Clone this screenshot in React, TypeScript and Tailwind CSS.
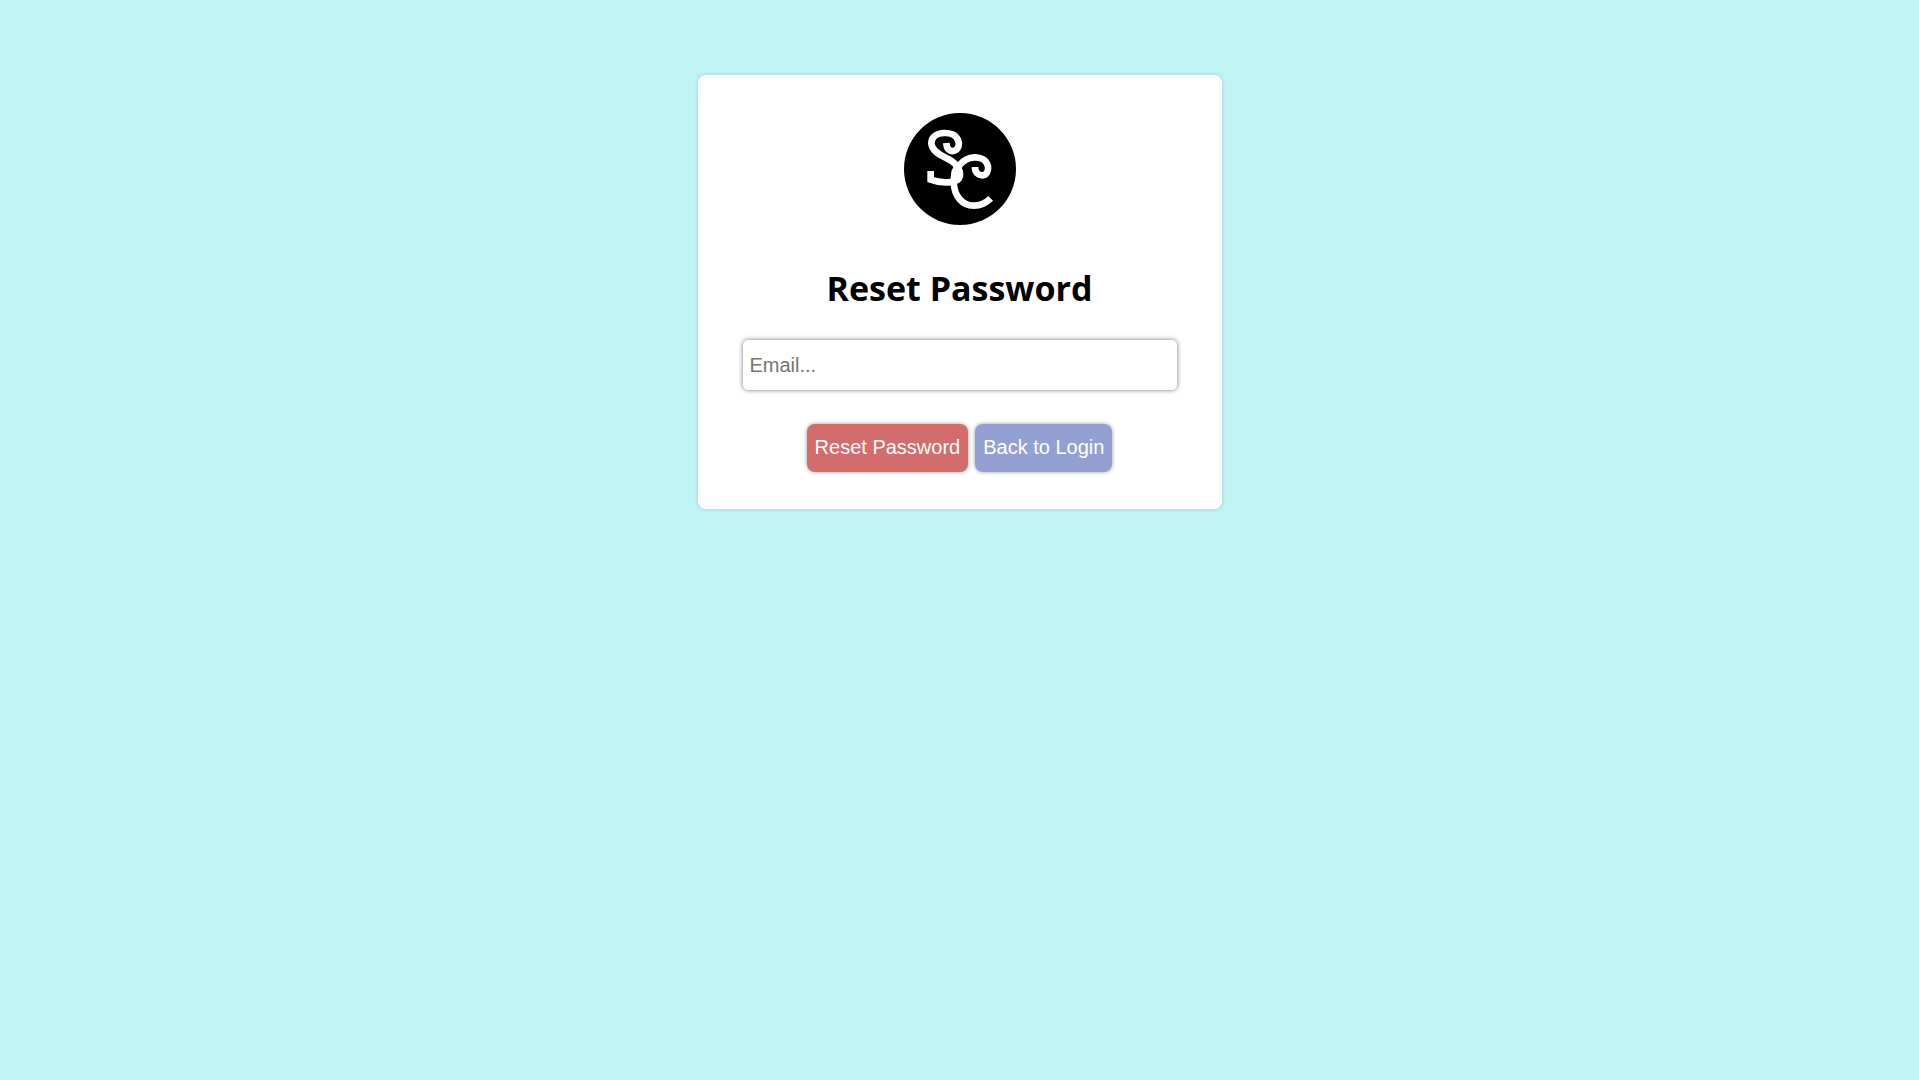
export default function App() {
  return (
    <main className="min-h-screen bg-[#c1f4f5] px-4 pt-[75px] pb-8">
      <section className="mx-auto flex w-full max-w-[524px] flex-col items-center rounded-lg bg-white px-[45px] pt-[38px] pb-[37px] shadow-[0_0_5px_rgba(0,0,0,0.15)]">
        <svg className="size-28" viewBox="27 24 336 336" role="img" aria-label="SC">
          <circle cx="195" cy="192" r="168" fill="#000" />
          <path d="M184 172 C198 182 206 196 205 210 C204 226 194 236 176 240 C168 230 166 214 170 196 Z" fill="#fff" />
          <g fill="none" stroke="#fff" strokeWidth="20">
            <path d="M154 114 C155 134 166 141 178 137 C192 132 194 116 189 105 C182 89 164 83 147 84 C123 85 109 98 109 115 C110 136 132 148 152 158 C178 170 193 184 194 206 C194 222 180 231 160 232 C140 233 122 230 107 224 L107 198" />
            <path d="M240 186 C240 203 250 211 262 211 C275 210 281 198 279 184 C275 165 258 156 238 157 C204 159 176 190 176 232 C178 274 202 302 236 302 C257 302 273 294 287 280" />
          </g>
        </svg>
        <h1 className="mt-10 font-['Open_Sans',sans-serif] text-[34px] leading-[46px] font-bold text-black">
          Reset Password
        </h1>
        <form className="mt-[29px] flex w-full flex-col items-center font-['Liberation_Sans',Arial,sans-serif] text-xl">
          <input
            type="email"
            aria-label="Email"
            placeholder="Email..."
            className="h-[50px] w-full rounded-[5px] bg-white px-[7px] shadow-[0_0_5px_rgba(0,0,0,0.55)] outline-none placeholder:text-[#757575]"
          />
          <div className="mt-[34px] flex flex-wrap justify-center gap-[7px] text-white">
            <button type="submit" className="h-12 rounded-lg bg-[#d36c6c] px-2 pb-0.5 shadow-[0_0_4px_rgba(0,0,0,0.4)]">
              Reset Password
            </button>
            <button type="button" className="h-12 rounded-lg bg-[#94a0d3] px-2 pb-0.5 shadow-[0_0_4px_rgba(0,0,0,0.4)]">
              Back to Login
            </button>
          </div>
        </form>
      </section>
    </main>
  );
}
